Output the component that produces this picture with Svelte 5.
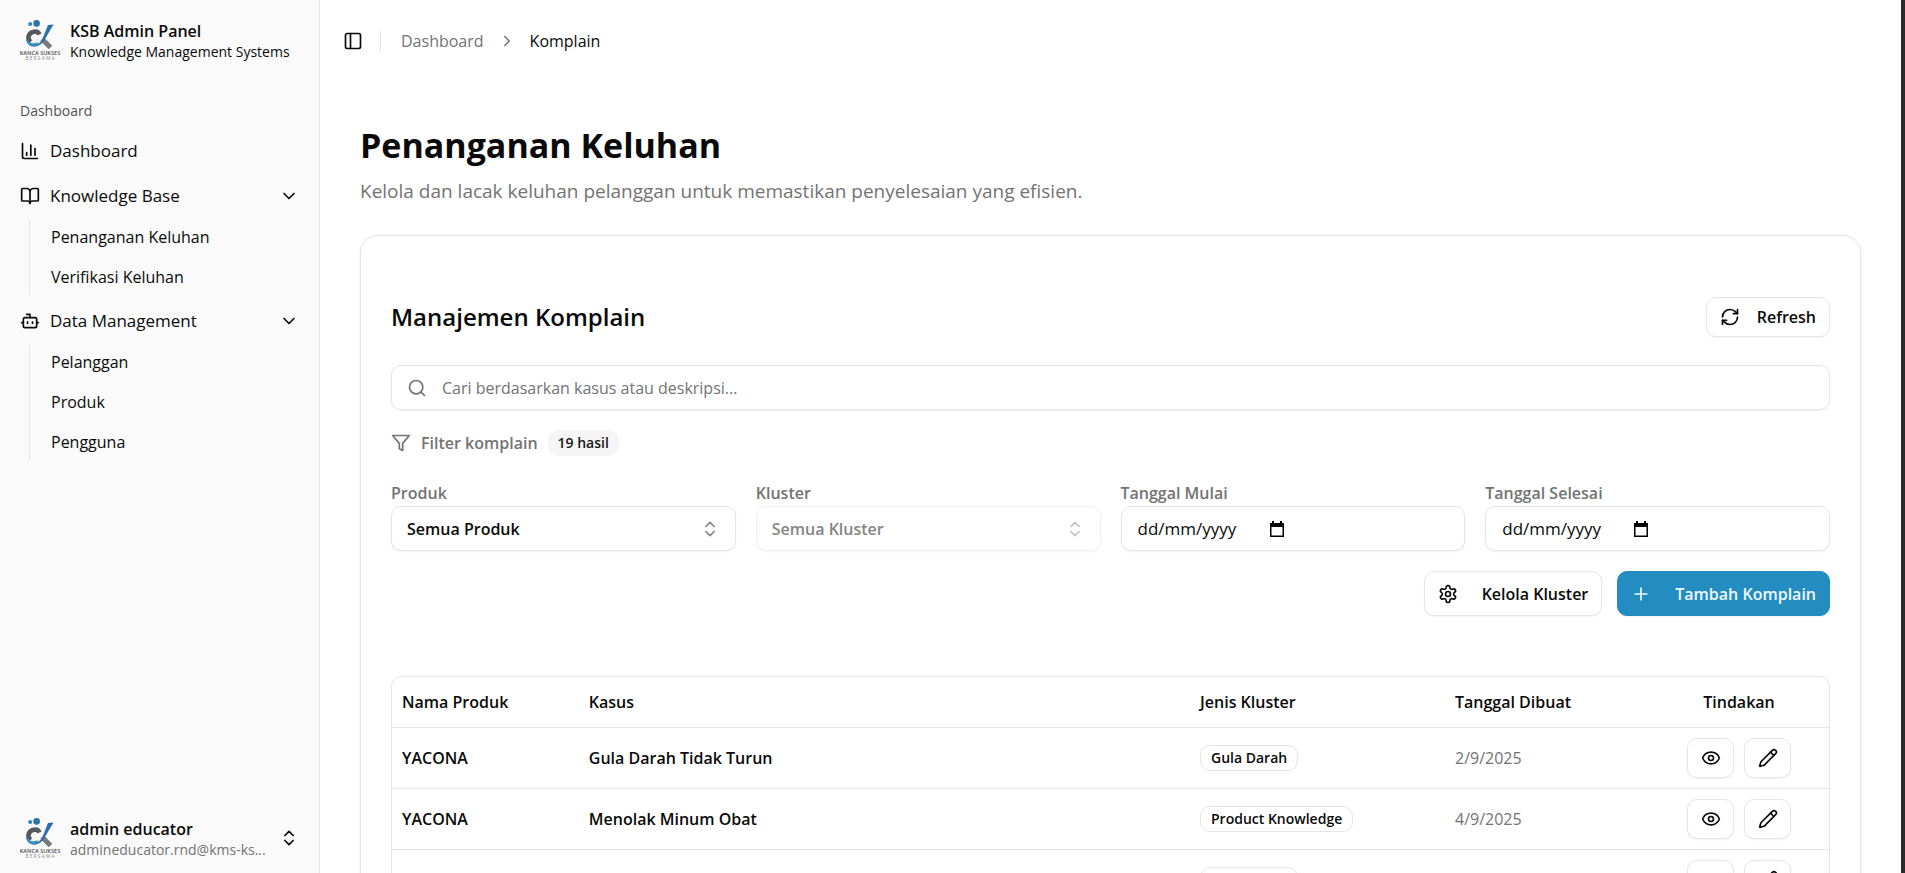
<script>
  let search = $state('');
  let startDate = $state('');
  let endDate = $state('');
  let openBase = $state(true);
  let openData = $state(true);

  const rows = [
    { product: 'YACONA', title: 'Gula Darah Tidak Turun', cluster: 'Gula Darah', date: '2/9/2025' },
    { product: 'YACONA', title: 'Menolak Minum Obat', cluster: 'Product Knowledge', date: '4/9/2025' },
    { product: 'YACONA', title: 'Gula darah naik', cluster: 'Gula Darah', date: '4/9/2025' }
  ];

  const icons = {
    chart: ['M3 3v16a2 2 0 0 0 2 2h16', 'M18 17V9', 'M13 17V5', 'M8 17v-3'],
    book: ['M12 7v14', 'M3 18a1 1 0 0 1-1-1V4a1 1 0 0 1 1-1h5a4 4 0 0 1 4 4 4 4 0 0 1 4-4h5a1 1 0 0 1 1 1v13a1 1 0 0 1-1 1h-6a3 3 0 0 0-3 3 3 3 0 0 0-3-3z'],
    bot: ['M12 8V4H8', 'M6 8h12a2 2 0 0 1 2 2v8a2 2 0 0 1-2 2H6a2 2 0 0 1-2-2v-8a2 2 0 0 1 2-2z', 'M2 14h2', 'M20 14h2', 'M15 13v2', 'M9 13v2'],
    down: ['m6 9 6 6 6-6'],
    right: ['m9 18 6-6-6-6'],
    updown: ['m7 15 5 5 5-5', 'm7 9 5-5 5 5'],
    panel: ['M5 3h14a2 2 0 0 1 2 2v14a2 2 0 0 1-2 2H5a2 2 0 0 1-2-2V5a2 2 0 0 1 2-2z', 'M9 3v18'],
    refresh: ['M3 12a9 9 0 0 1 9-9 9.75 9.75 0 0 1 6.74 2.74L21 8', 'M21 3v5h-5', 'M21 12a9 9 0 0 1-9 9 9.75 9.75 0 0 1-6.74-2.74L3 16', 'M8 16H3v5'],
    search: ['M19 11a8 8 0 1 1-16 0 8 8 0 0 1 16 0z', 'm21 21-4.3-4.3'],
    filter: ['M22 3H2l8 9.46V19l4 2v-8.54L22 3z'],
    gear: ['M12.22 2h-.44a2 2 0 0 0-2 2v.18a2 2 0 0 1-1 1.73l-.43.25a2 2 0 0 1-2 0l-.15-.08a2 2 0 0 0-2.73.73l-.22.38a2 2 0 0 0 .73 2.73l.15.1a2 2 0 0 1 1 1.72v.51a2 2 0 0 1-1 1.74l-.15.09a2 2 0 0 0-.73 2.73l.22.38a2 2 0 0 0 2.73.73l.15-.08a2 2 0 0 1 2 0l.43.25a2 2 0 0 1 1 1.73V20a2 2 0 0 0 2 2h.44a2 2 0 0 0 2-2v-.18a2 2 0 0 1 1-1.73l.43-.25a2 2 0 0 1 2 0l.15.08a2 2 0 0 0 2.73-.73l.22-.39a2 2 0 0 0-.73-2.73l-.15-.08a2 2 0 0 1-1-1.74v-.5a2 2 0 0 1 1-1.74l.15-.09a2 2 0 0 0 .73-2.73l-.22-.38a2 2 0 0 0-2.73-.73l-.15.08a2 2 0 0 1-2 0l-.43-.25a2 2 0 0 1-1-1.73V4a2 2 0 0 0-2-2z', 'M15 12a3 3 0 1 1-6 0 3 3 0 0 1 6 0z'],
    plus: ['M5 12h14', 'M12 5v14'],
    eye: ['M2.06 12.35a1 1 0 0 1 0-.7 10.75 10.75 0 0 1 19.88 0 1 1 0 0 1 0 .7 10.75 10.75 0 0 1-19.88 0', 'M15 12a3 3 0 1 1-6 0 3 3 0 0 1 6 0z'],
    pencil: ['M21.17 6.81a1 1 0 0 0-3.98-3.98L3.84 16.17a2 2 0 0 0-.5.83l-1.32 4.35a.5.5 0 0 0 .62.62l4.35-1.32a2 2 0 0 0 .83-.5z', 'm15 5 4 4']
  };
</script>

{#snippet icon(name)}
  <svg class="icon" viewBox="0 0 24 24" aria-hidden="true">
    {#each icons[name] as d}<path {d} />{/each}
  </svg>
{/snippet}

{#snippet logo()}
  <svg class="logo" viewBox="0 0 40 40" role="img" aria-label="Kanca Sukses Bersama">
    <circle cx="10.2" cy="4" r="2.1" fill="#3389b8" />
    <circle cx="16.6" cy="3.4" r="3.3" fill="#2874ab" />
    <path d="M22 19 L30.500 27.500" stroke="#77797c" stroke-width="5" />
    <path d="M19.500 14.500C17.500 10 10 11 8.500 16.500C8 19 9 20.500 10.500 22" fill="none" stroke="#55585c" stroke-width="4.600" />
    <path d="M8 19C9 26 18 27 22 20L28 5L33.500 4.500L25 19C20 29 8 29 6.300 20Z" fill="#2b6fae" />
    <path d="M7 19C9 24 14 24 18 22L17 25C12 28 7 24 6.300 20Z" fill="#3494c0" />
    <text x="20" y="35" font-size="5.600" font-weight="600" text-anchor="middle" fill="#4b4d50">KANCA SUKSES</text>
    <text x="20" y="40" font-size="4.800" text-anchor="middle" fill="#8c8c8c">B E R S A M A</text>
  </svg>
{/snippet}

<div class="shell">
  <aside>
    <a class="brand" href="#home">
      {@render logo()}
      <span class="who"><strong>KSB Admin Panel</strong><span>Knowledge Management Systems</span></span>
    </a>
    <nav aria-label="Menu">
      <p class="group">Dashboard</p>
      <a class="item" href="#dashboard">{@render icon('chart')}<span>Dashboard</span></a>
      <button class="item" aria-expanded={openBase} onclick={() => (openBase = !openBase)}>
        {@render icon('book')}<span>Knowledge Base</span>{@render icon('down')}
      </button>
      {#if openBase}
        <div class="sub">
          <a href="#keluhan">Penanganan Keluhan</a>
          <a href="#verifikasi">Verifikasi Keluhan</a>
        </div>
      {/if}
      <button class="item" aria-expanded={openData} onclick={() => (openData = !openData)}>
        {@render icon('bot')}<span>Data Management</span>{@render icon('down')}
      </button>
      {#if openData}
        <div class="sub">
          <a href="#pelanggan">Pelanggan</a>
          <a href="#produk">Produk</a>
          <a href="#pengguna">Pengguna</a>
        </div>
      {/if}
    </nav>
    <button class="brand user">
      {@render logo()}
      <span class="who"><strong>admin educator</strong><span class="mail">admineducator.rnd@kms-ks...</span></span>
      {@render icon('updown')}
    </button>
  </aside>

  <main>
    <header>
      <button class="toggle" aria-label="Toggle Sidebar">{@render icon('panel')}</button>
      <span class="rule"></span>
      <a href="#dashboard">Dashboard</a>
      {@render icon('right')}
      <span class="here">Komplain</span>
    </header>

    <div class="page">
      <h1>Penanganan Keluhan</h1>
      <p class="lead">Kelola dan lacak keluhan pelanggan untuk memastikan penyelesaian yang efisien.</p>

      <section class="card">
        <div class="head">
          <h2>Manajemen Komplain</h2>
          <button class="btn small">{@render icon('refresh')}Refresh</button>
        </div>

        <label class="field search">
          {@render icon('search')}
          <input type="text" aria-label="Cari" placeholder="Cari berdasarkan kasus atau deskripsi..." bind:value={search} />
        </label>

        <div class="count">{@render icon('filter')}<span>Filter komplain</span><span class="pill">19 hasil</span></div>

        <div class="filters">
          <div>
            <label for="product">Produk</label>
            <div class="field pick">
              <select id="product"><option>Semua Produk</option></select>
              {@render icon('updown')}
            </div>
          </div>
          <div>
            <label for="cluster">Kluster</label>
            <div class="field pick off">
              <select id="cluster" disabled><option>Semua Kluster</option></select>
              {@render icon('updown')}
            </div>
          </div>
          {@render dateField('start', 'Tanggal Mulai')}
          {@render dateField('end', 'Tanggal Selesai')}
        </div>

        <div class="actions">
          <button class="btn">{@render icon('gear')}Kelola Kluster</button>
          <button class="btn primary">{@render icon('plus')}Tambah Komplain</button>
        </div>

        <div class="tablebox">
          <table>
            <thead>
              <tr>
                <th class="c1">Nama Produk</th>
                <th>Kasus</th>
                <th class="c3">Jenis Kluster</th>
                <th class="c4">Tanggal Dibuat</th>
                <th class="c5">Tindakan</th>
              </tr>
            </thead>
            <tbody>
              {#each rows as row}
                <tr>
                  <td>{row.product}</td>
                  <td>{row.title}</td>
                  <td><span class="tag">{row.cluster}</span></td>
                  <td class="date">{row.date}</td>
                  <td>
                    <div class="tools">
                      <button class="btn tool" aria-label="Lihat">{@render icon('eye')}</button>
                      <button class="btn tool" aria-label="Ubah">{@render icon('pencil')}</button>
                    </div>
                  </td>
                </tr>
              {/each}
            </tbody>
          </table>
        </div>
      </section>
    </div>
  </main>
</div>

{#snippet dateField(id, label)}
  <div>
    <label for={id}>{label}</label>
    <div class="field day">
      {#if id === 'start'}
        <input {id} type="text" placeholder="dd/mm/yyyy" bind:value={startDate} />
      {:else}
        <input {id} type="text" placeholder="dd/mm/yyyy" bind:value={endDate} />
      {/if}
      <button aria-label="Pilih tanggal">
        <svg viewBox="0 0 14 16" aria-hidden="true"><path d="M2 0h2v2h6V0h2v2h2v14H0V2h2zM1.500 6v8.500h11V6z" fill="#000" fill-rule="evenodd" /></svg>
      </button>
    </div>
  </div>
{/snippet}

<style>
  :global(body) { margin: 0; background: #fff; }
  * { box-sizing: border-box; }
  .shell {
    display: flex;
    height: 100vh;
    overflow: hidden;
    border-right: 4px solid #2b2b2b;
    font: 16px/24px "Open Sans", "Noto Sans", sans-serif;
    color: #0a0a0a;
  }
  button, input, select { font: inherit; color: inherit; margin: 0; }
  button { cursor: pointer; background: none; border: 0; padding: 0; }
  a { color: inherit; text-decoration: none; }
  .icon {
    width: 20px;
    height: 20px;
    flex: none;
    fill: none;
    stroke: currentColor;
    stroke-width: 2;
    stroke-linecap: round;
    stroke-linejoin: round;
  }

  aside {
    width: 320px;
    flex: none;
    display: flex;
    flex-direction: column;
    padding: 10px 10px 5px;
    background: #fafafa;
    border-right: 1px solid #e5e5e5;
  }
  .brand { display: flex; align-items: center; gap: 10px; height: 60px; padding: 0 10px; text-align: left; }
  .logo { width: 40px; height: 40px; flex: none; overflow: visible; }
  .who { display: flex; flex-direction: column; flex: 1; min-width: 0; padding-top: 2px; font-size: 14px; line-height: 20px; white-space: nowrap; }
  .who strong { font-size: 16px; line-height: 22px; font-weight: 600; }
  .mail { color: #737373; }
  nav { flex: 1; display: flex; flex-direction: column; gap: 5px; padding-top: 21px; }
  .group { margin: 0 0 -5px; padding: 0 10px; font-size: 14px; line-height: 40px; font-weight: 500; color: #525252; }
  .item { display: flex; align-items: center; gap: 10px; height: 40px; padding: 0 10px; font-size: 17px; text-align: left; }
  .item span { flex: 1; }
  .sub { display: flex; flex-direction: column; gap: 5px; margin: -1px 0 1px 19px; padding: 0 0 0 21px; border-left: 1px solid #e5e5e5; }
  .sub a { line-height: 35px; }

  main { flex: 1; min-width: 0; overflow-y: auto; scrollbar-width: none; }
  header { display: flex; align-items: center; height: 81px; padding: 0 20px; color: #737373; }
  header > .icon { width: 18px; height: 18px; margin: 0 14px; }
  .toggle { display: grid; place-items: center; width: 26px; height: 34px; color: #0a0a0a; }
  .rule { width: 1px; height: 20px; margin: 0 20px 0 14px; background: #e5e5e5; }
  .here { color: #0a0a0a; }
  .page { padding: 40px; }
  h1 { margin: 0; font-size: 34px; line-height: 48px; font-weight: 700; }
  .lead { margin: 8px 0 30px; font-size: 19px; line-height: 28px; color: #737373; }

  .card { padding: 61px 30px 30px; border: 1px solid #e5e5e5; border-radius: 18px; box-shadow: 0 1px 3px rgb(0 0 0 / 10%); }
  .head { display: flex; align-items: center; justify-content: space-between; margin-bottom: 28px; }
  h2 { margin: 0; font-size: 24px; line-height: 32px; font-weight: 600; }
  .btn {
    display: inline-flex;
    align-items: center;
    gap: 24px;
    height: 45px;
    padding: 0 13px;
    border: 1px solid #e5e5e5;
    border-radius: 10px;
    background: #fff;
    box-shadow: 0 1px 2px rgb(0 0 0 / 5%);
    font-weight: 600;
  }
  .small { height: 40px; gap: 17px; }
  .primary { background: #238cc1; border-color: #238cc1; color: #f0f9ff; }
  .field {
    display: flex;
    align-items: center;
    height: 45px;
    border: 1px solid #e5e5e5;
    border-radius: 10px;
    background: #fff;
    box-shadow: 0 1px 2px rgb(0 0 0 / 5%);
  }
  .field input { border: 0; outline: 0; background: none; padding: 0; min-width: 0; }
  .search { gap: 15px; padding: 0 15px; color: #737373; }
  .search input { flex: 1; }
  .field input::placeholder { color: inherit; opacity: 1; }
  .count { display: flex; align-items: center; gap: 10px; margin: 20px 0 24px; line-height: 26px; font-weight: 600; color: #737373; }
  .pill { padding: 0 10px; border-radius: 10px; background: #f5f5f5; color: #171717; font-size: 14px; }
  .filters { display: grid; grid-template-columns: repeat(4, minmax(0, 1fr)); gap: 20px; }
  .filters label { display: block; line-height: 26px; font-weight: 600; color: #737373; }
  .pick { display: grid; grid-template-columns: 1fr 50px; }
  .pick select { grid-area: 1 / 1 / 2 / 3; width: 100%; height: 43px; appearance: none; border: 0; outline: 0; background: none; padding: 0 15px; font-weight: 600; opacity: 1; }
  .pick .icon { grid-area: 1 / 2; justify-self: center; color: #858585; pointer-events: none; }
  .off { border-color: #f2f2f2; color: #858585; }
  .off .icon { color: #c2c2c2; }
  .day { gap: 16px; padding: 0 16px; }
  .day input { width: 116px; font-size: 17px; }
  .day button { display: grid; place-items: center; width: 14px; height: 20px; }
  .day svg { width: 14px; height: 16px; }
  .actions { display: flex; justify-content: flex-end; gap: 15px; margin: 20px 0 60px; }

  .tablebox { border: 1px solid #e5e5e5; border-radius: 10px; overflow: hidden; }
  table { width: 100%; border-collapse: collapse; table-layout: fixed; font-size: 16px; font-weight: 600; }
  th { height: 50px; padding: 0 10px; text-align: left; font-weight: 600; }
  td { height: 61px; padding: 0 10px; border-top: 1px solid #e5e5e5; }
  .c1 { width: 13%; }
  .c3 { width: 255px; }
  .c4 { width: 204px; }
  .c5 { width: 180px; text-align: center; }
  .tag { display: inline-block; padding: 0 10px; border: 1px solid #e5e5e5; border-radius: 10px; font-size: 14px; line-height: 24px; }
  .date { font-weight: 400; color: #737373; }
  .tools { display: flex; justify-content: center; gap: 10px; }
  .tool { width: 47px; height: 40px; padding: 0; justify-content: center; }
</style>
